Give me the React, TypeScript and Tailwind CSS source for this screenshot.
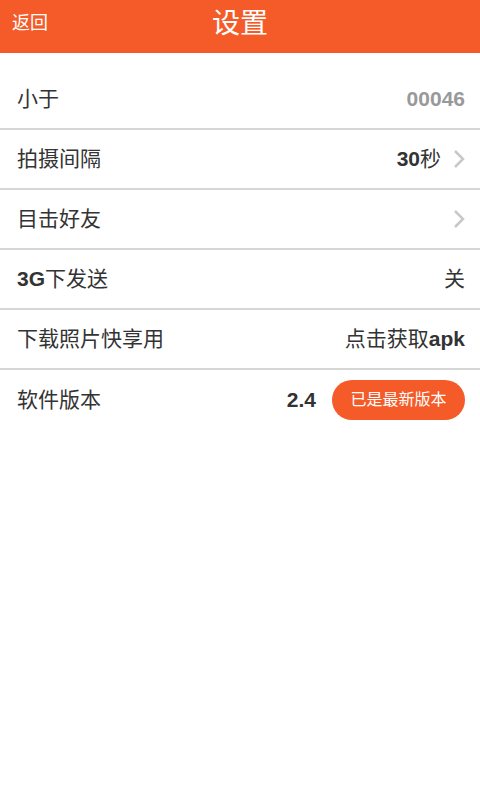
const font = { fontFamily: '"Liberation Sans", "Noto Sans CJK SC", sans-serif' };

function Chevron() {
  return (
    <svg width="12" height="20" viewBox="0 0 12 20" className="ml-3">
      <path d="M2 2 L10 10 L2 18" fill="none" stroke="#c8c8c8" strokeWidth="2.5" />
    </svg>
  );
}

function Row({ label, children, last }: { label: React.ReactNode; children?: React.ReactNode; last?: boolean }) {
  return (
    <div
      className={`flex items-center justify-between h-[60px] pl-[17px] pr-[15px] ${
        last ? '' : 'border-b-2 border-[#d6d6d6]'
      }`}
    >
      <div className="text-[21px] text-[#333]">{label}</div>
      <div className="flex items-center text-[21px] text-[#333]">{children}</div>
    </div>
  );
}

export default function App() {
  return (
    <div className="w-[480px] h-[800px] bg-white" style={font}>
      <div className="relative h-[53px] bg-[#f45b28] flex items-center justify-center">
        <span className="absolute left-[12px] top-[10px] text-[18px] text-white">返回</span>
        <span className="text-[28px] text-white -mt-[6px]">设置</span>
      </div>
      <div className="pt-[17px]">
        <Row label="小于">
          <span className="font-bold text-[#999]">00046</span>
        </Row>
        <Row label="拍摄间隔">
          <span className="font-bold">30</span>
          <span>秒</span>
          <Chevron />
        </Row>
        <Row label="目击好友">
          <Chevron />
        </Row>
        <Row label={<><span className="font-bold">3G</span>下发送</>}>
          <span>关</span>
        </Row>
        <Row label="下载照片快享用">
          <span>点击获取</span>
          <span className="font-bold">apk</span>
        </Row>
        <Row label="软件版本" last>
          <span className="font-bold mr-[16px]">2.4</span>
          <button className="h-[40px] w-[133px] rounded-full bg-[#f45b28] text-white text-[16px]">
            已是最新版本
          </button>
        </Row>
      </div>
    </div>
  );
}
